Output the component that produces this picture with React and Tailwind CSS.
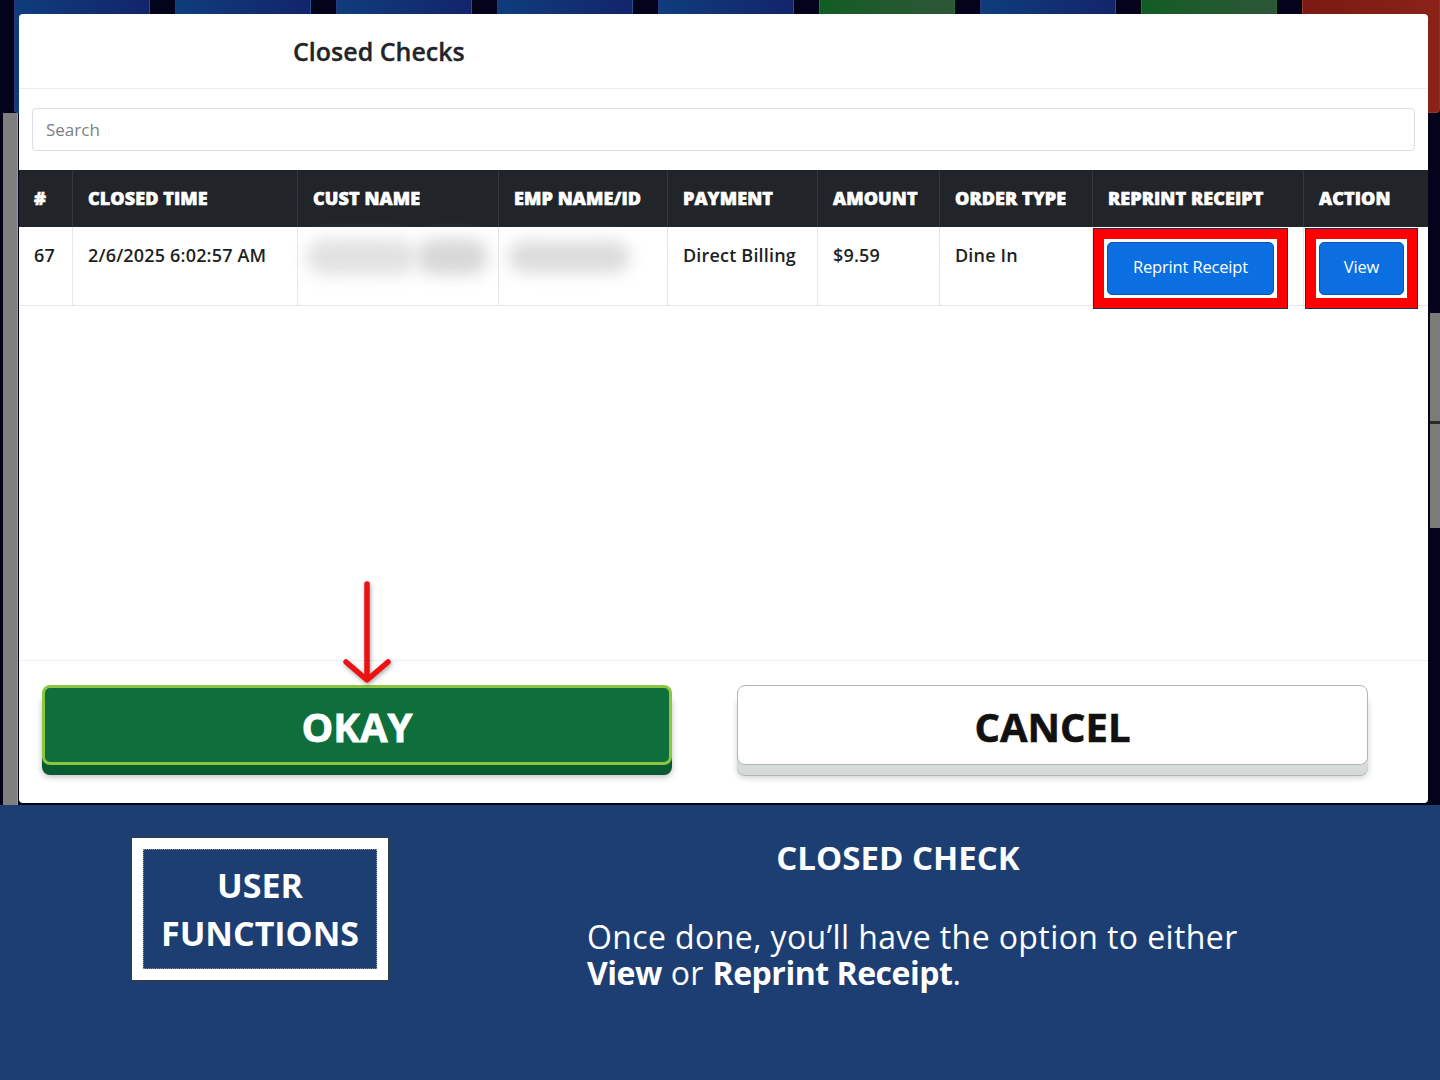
import React from "react";

const tiles = [
  { w: "w-[136px]", c: "bg-gradient-to-r from-[#0e3d7c] to-[#12246c]" },
  { w: "w-[136px]", c: "bg-gradient-to-r from-[#0e3d7c] to-[#12246c]" },
  { w: "w-[136px]", c: "bg-gradient-to-r from-[#0e3d7c] to-[#12246c]" },
  { w: "w-[136px]", c: "bg-gradient-to-r from-[#0e3d7c] to-[#12246c]" },
  { w: "w-[136px]", c: "bg-gradient-to-r from-[#0e3d7c] to-[#12246c]" },
  { w: "w-[136px]", c: "bg-gradient-to-r from-[#0f5d22] to-[#2c5637]" },
  { w: "w-[136px]", c: "bg-gradient-to-r from-[#0e3d7c] to-[#12246c]" },
  { w: "w-[136px]", c: "bg-gradient-to-r from-[#0f5d22] to-[#2c5637]" },
  { w: "w-[138px]", c: "bg-gradient-to-r from-[#7a1a12] to-[#8a2217]" },
];

const columns = [
  { label: "#", w: "w-[54px]" },
  { label: "Closed Time", w: "w-[225px]" },
  { label: "Cust Name", w: "w-[201px]" },
  { label: "Emp Name/ID", w: "w-[169px]" },
  { label: "Payment", w: "w-[150px]" },
  { label: "Amount", w: "w-[122px]" },
  { label: "Order Type", w: "w-[153px]" },
  { label: "Reprint Receipt", w: "w-[211px]" },
  { label: "Action", w: "w-[124px]" },
];

// red highlight frame around the row buttons
const Highlight = ({ width, children }) => (
  <div
    className={`mt-[2px] h-[79px] ${width} border-[10px] border-[#ff0000] bg-white p-[3px] shadow-[0_0_0_1px_#1f2d55]`}
  >
    {children}
  </div>
);

const BlueButton = ({ children }) => (
  <button className="flex h-full w-full items-center justify-center rounded-[5px] border border-[#0a56b8] bg-[#0b6fe2] pb-[3px] text-[16.5px] tracking-[-0.01em] text-white">
    {children}
  </button>
);

const Cell = ({ w, children, last }) => (
  <div
    className={`${w} h-[78px] shrink-0 ${last ? "" : "border-r border-[#e4e6e8]"} pl-[15px] pt-[15px] text-[18px] font-semibold tracking-[0.01em] text-[#1d1f22]`}
  >
    {children}
  </div>
);

const App = () => {
  return (
    <div className="w-[1440px] h-[1080px] overflow-hidden font-['Open_Sans','Noto_Sans',sans-serif]">
      {/* screenshot area */}
      <div className="relative h-[805px] bg-[#03031b] overflow-hidden">
        {/* background tiles */}
        <div className="flex gap-[25px] pl-[14px]">
          {tiles.map((t, i) => (
            <div
              key={i}
              className={`${t.w} h-[113px] shrink-0 rounded-b-[4px] border border-t-0 border-white/10 ${t.c}`}
            />
          ))}
        </div>
        <div className="flex justify-between">
          <div className="ml-[3px] h-[692px] w-[15px] bg-[#7f7f7f] border-r border-[#9a9a9a]" />
          <div className="mt-[200px] flex h-[215px] w-[10px] flex-col">
            <div className="h-[108px] bg-[#7c7b78]" />
            <div className="h-[3px] bg-[#2a2a2a]" />
            <div className="flex-1 bg-[#7c7b78]" />
          </div>
        </div>

        {/* modal */}
        <div className="absolute left-[19px] top-[14px] flex h-[789px] w-[1409px] flex-col rounded-[4px] bg-white">
          <div className="h-[75px] shrink-0 border-b border-[#ebedef] pl-[274px] pt-[19px] text-[25px] font-semibold text-[#212529] [-webkit-text-stroke:0.3px_#212529]">
            Closed Checks
          </div>
          <div className="flex-1">
            <div className="mx-[13px] mt-[19px] flex h-[43px] items-center rounded-[4px] border border-[#dcdfe2] pl-[13px] text-[17px] text-[#7b7f84]">
              Search
            </div>
            <div className="mt-[19px]">
              <div className="flex h-[57px] bg-[#212529]">
                {columns.map((c, i) => (
                  <div
                    key={c.label}
                    className={`${c.w} shrink-0 ${i < columns.length - 1 ? "border-r border-[#32383e]" : ""} flex items-center pl-[15px] text-[18px] font-extrabold uppercase tracking-[0.005em] text-white [-webkit-text-stroke:0.6px_white]`}
                  >
                    {c.label}
                  </div>
                ))}
              </div>
              <div className="flex border-b border-[#e4e6e8]">
                <Cell w="w-[54px]">67</Cell>
                <Cell w="w-[225px]">2/6/2025 6:02:57 AM</Cell>
                <div className="w-[201px] h-[78px] shrink-0 border-r border-[#e4e6e8] pl-[8px] pt-[12px]">
                  <div className="flex">
                    <div className="h-[36px] w-[110px] rounded-full bg-[#e2e2e2] blur-[8px]" />
                    <div className="h-[36px] w-[72px] rounded-full bg-[#d8d8d8] blur-[8px]" />
                  </div>
                </div>
                <div className="w-[169px] h-[78px] shrink-0 border-r border-[#e4e6e8] pl-[9px] pt-[14px]">
                  <div className="h-[32px] w-[122px] rounded-full bg-[#dcdcdc] blur-[8px]" />
                </div>
                <Cell w="w-[150px]">Direct Billing</Cell>
                <Cell w="w-[122px]">$9.59</Cell>
                <Cell w="w-[153px]">Dine In</Cell>
                <div className="w-[211px] h-[78px] shrink-0 border-r border-[#e4e6e8] pl-[1px]">
                  <Highlight width="w-[193px]">
                    <BlueButton>Reprint Receipt</BlueButton>
                  </Highlight>
                </div>
                <div className="w-[124px] h-[78px] shrink-0 pl-[2px]">
                  <Highlight width="w-[111px]">
                    <BlueButton>View</BlueButton>
                  </Highlight>
                </div>
              </div>
            </div>
          </div>

          {/* footer */}
          <div className="flex h-[143px] shrink-0 gap-[65px] border-t border-[#eceeef] pl-[23px] pt-[24px]">
            <button className="h-[80px] w-[630px] rounded-[8px] border-[3px] border-[#8cc63f] bg-[#0e6e3c] pt-[4px] text-[40px] font-bold text-white [-webkit-text-stroke:0.8px_white] shadow-[0_10px_0_#0a5a31,0_12px_6px_rgba(0,0,0,0.25)]">
              OKAY
            </button>
            <button className="h-[80px] w-[631px] rounded-[8px] border border-[#b5b5b5] bg-white pt-[4px] text-[40px] font-bold text-[#111] [-webkit-text-stroke:0.6px_#111] shadow-[0_10px_0_#d6dad8,0_11px_0_#b3b6b4,0_13px_6px_rgba(0,0,0,0.18)]">
              CANCEL
            </button>
          </div>
        </div>

        {/* red arrow pointing at OKAY */}
        <svg
          className="absolute left-[340px] top-[578px] drop-shadow-[1px_2px_2px_rgba(0,0,0,0.35)]"
          width="56"
          height="108"
          viewBox="0 0 56 108"
        >
          <path
            d="M27 6 V100 M6 84 L27 102 L48 84"
            fill="none"
            stroke="#ee1111"
            strokeWidth="5.5"
            strokeLinecap="round"
            strokeLinejoin="round"
          />
        </svg>
      </div>

      {/* caption panel */}
      <div className="flex h-[275px] bg-[#1c3e73] text-white">
        <div className="ml-[132px] mt-[33px] h-[142px] w-[256px] border-[11px] border-white p-0 shadow-[0_0_0_1px_#3a3a3a]">
          <div className="flex h-full w-full flex-col items-center justify-center border border-dotted border-[#8a8fa0] text-[34px] font-bold leading-[48px]">
            <span>USER</span>
            <span>FUNCTIONS</span>
          </div>
        </div>
        <div className="ml-[199px] mt-[30px] flex w-[700px] flex-col">
          <div className="w-[622px] text-center text-[33px] font-bold leading-[46px]">
            CLOSED CHECK
          </div>
          <p className="mt-[38px] text-[32px] leading-[36px] tracking-[0.0125em]">
            Once done, you’ll have the option to either
            <br />
            <span className="font-bold tracking-[-0.015em]">View</span> or{" "}
            <span className="font-bold tracking-[-0.015em]">Reprint Receipt</span>.
          </p>
        </div>
      </div>
    </div>
  );
};

export default App;
